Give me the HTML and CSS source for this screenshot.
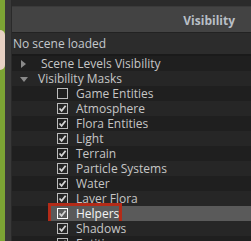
FILE: index.html
```html
<!DOCTYPE html>
<html lang="en">
<head>
  <meta charset="UTF-8" />
  <title>Visibility</title>
  <link rel="stylesheet" href="styles.css">
</head>
<body>
  <div class="viewport">
    <div class="blob"></div>
  </div>
  <div class="dock-edge"></div>

  <div class="panel">
    <div class="topbar"></div>
    <div class="header">Visibility</div>
    <div class="status">No scene loaded</div>

    <ul class="tree">
      <li class="row group">
        <span class="arrow closed"></span>Scene Levels Visibility
      </li>
      <li class="row group">
        <span class="arrow open"></span>Visibility Masks
      </li>
      <li class="row item"><span class="check"></span>Game Entities</li>
      <li class="row item"><span class="check on"></span>Atmosphere</li>
      <li class="row item"><span class="check on"></span>Flora Entities</li>
      <li class="row item"><span class="check on"></span>Light</li>
      <li class="row item"><span class="check on"></span>Terrain</li>
      <li class="row item"><span class="check on"></span>Particle Systems</li>
      <li class="row item"><span class="check on"></span>Water</li>
      <li class="row item"><span class="check on"></span>Laver Flora</li>
      <li class="row item selected">
        <span class="check on"></span>Helpers
        <span class="callout"></span>
      </li>
      <li class="row item"><span class="check on"></span>Shadows</li>
      <li class="row item"><span class="check on"></span>Entities</li>
    </ul>
  </div>
</body>
</html>
```

FILE: styles.css
```css
* {
  box-sizing: border-box;
}
html, body {
  margin: 0;
  height: 100%;
  overflow: hidden;
}
body {
  display: flex;
  background: #222;
  font-family: "Open Sans", "Noto Sans", sans-serif;
  font-size: 12px;
  line-height: 15px;
  color: #c6c6c6;
}
.viewport {
  width: 5px;
  flex: none;
  background: #7ca434;
  position: relative;
}
.blob {
  position: absolute;
  top: 30px;
  left: 0;
  width: 5px;
  height: 40px;
  background: #e8d2c4;
  border-radius: 0 6px 6px 0;
}
.dock-edge {
  width: 7px;
  flex: none;
  background: #393939;
  border-right: 1px solid #2a2a2a;
}
.panel {
  flex: 1;
  display: flex;
  flex-direction: column;
  min-width: 0;
}
.panel > * {
  flex: none;
}
.topbar {
  height: 7px;
  background: #2b2b2b;
  border-bottom: 1px solid #3a3a3a;
}
.header {
  height: 26px;
  background: #434343;
  border-bottom: 1px solid #222;
  display: flex;
  align-items: center;
  justify-content: flex-end;
  padding-right: 16px;
  padding-top: 1px;
  font-weight: bold;
  color: #b9bfc6;
}
.status {
  height: 23px;
  background: #2c2c2c;
  display: flex;
  align-items: center;
  padding-left: 1px;
  color: #c4c8cc;
  border-bottom: 2px solid #1a1a1a;
}
.tree {
  list-style: none;
  margin: 0;
  padding: 0;
}
.row {
  height: 15px;
  display: flex;
  align-items: center;
  white-space: nowrap;
  background: #1f1f1f;
  position: relative;
}
.row:nth-child(even) {
  background: #262626;
}
.row.group {
  padding-left: 8px;
}
.row.item {
  padding-left: 45px;
}
.row.selected {
  background: linear-gradient(to right, #1f1f1f 38px, #5a5a5a 38px);
  color: #f4f4f4;
}
.arrow {
  width: 0;
  height: 0;
}
.arrow.closed {
  margin-left: 1px;
  border-top: 4px solid transparent;
  border-bottom: 4px solid transparent;
  border-left: 5px solid #8a8a8a;
  margin-right: 15px;
}
.arrow.open {
  border-left: 4px solid transparent;
  border-right: 4px solid transparent;
  border-top: 5px solid #8a8a8a;
  margin-right: 10px;
  margin-top: 1px;
}
.check {
  width: 11px;
  height: 11px;
  border: 1px solid #bcbcbc;
  margin-right: 8px;
  flex: none;
}
.check.on {
  background: url("data:image/svg+xml;utf8,<svg xmlns='http://www.w3.org/2000/svg' width='9' height='9'><path d='M1.5 4.5 L3.6 6.8 L7.6 1.8' fill='none' stroke='%23d4d4d4' stroke-width='1.8'/></svg>") center / 9px 9px no-repeat;
}
.selected .check {
  border-color: #fff;
  background-color: #5a5a5a;
}
.callout {
  position: absolute;
  left: 36px;
  top: -3px;
  width: 74px;
  height: 21px;
  border: 3px solid #b32b18;
}
```
